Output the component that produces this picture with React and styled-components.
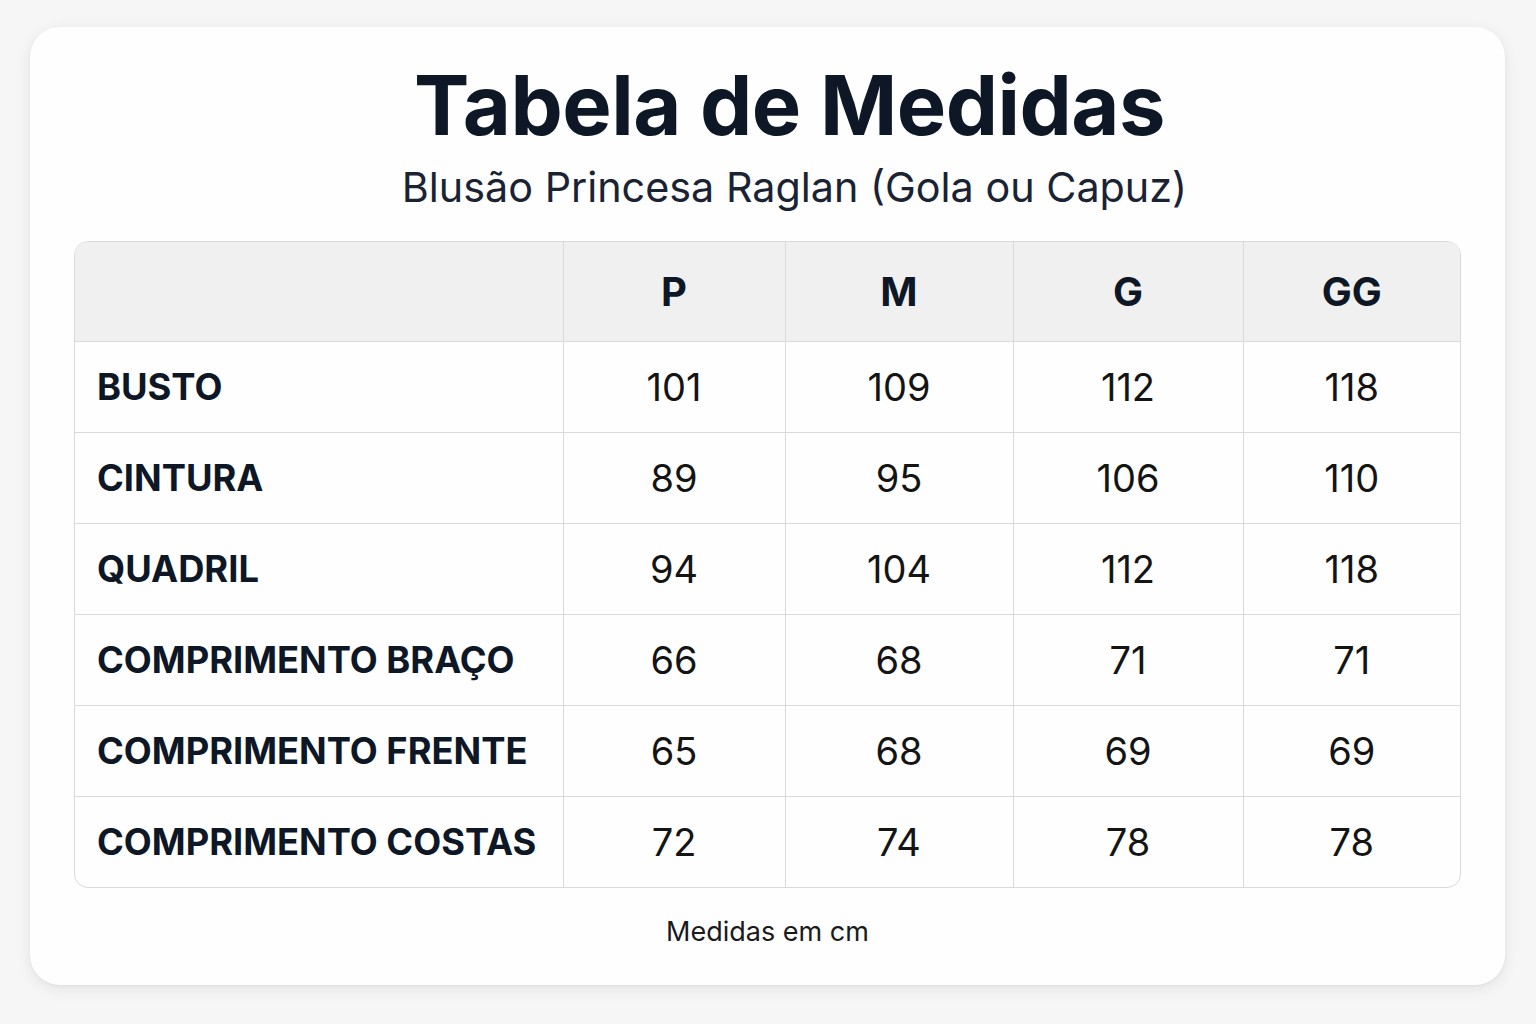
import React from 'react';
import styled, { createGlobalStyle } from 'styled-components';

const GlobalStyle = createGlobalStyle`
  html, body {
    margin: 0;
    padding: 0;
    background: #f6f6f6;
    font-family: Inter, "Noto Sans", sans-serif;
  }
`;

const Page = styled.div`
  width: 1536px;
  height: 1024px;
  box-sizing: border-box;
  padding: 27px 31px 39px 30px;
`;

const Card = styled.div`
  height: 100%;
  box-sizing: border-box;
  background: #fefefe;
  border-radius: 30px;
  box-shadow: 0 4px 16px rgba(0, 0, 0, 0.08), 0 1px 3px rgba(0, 0, 0, 0.05);
  padding: 37px 45px 0 45px;
  display: flex;
  flex-direction: column;
  align-items: center;
`;

const Title = styled.h1`
  margin: 0 0 0 44px;
  font-size: 83px;
  line-height: 1;
  font-weight: 700;
  color: #0d1726;
  letter-spacing: -0.5px;
`;

const Subtitle = styled.p`
  margin: 20px 0 0 54px;
  font-size: 41.3px;
  line-height: 1;
  font-weight: 400;
  color: #1a2333;
`;

const TableWrap = styled.div`
  margin-top: 33px;
  width: 100%;
  border: 1.5px solid #dadada;
  border-radius: 14px;
  overflow: hidden;
`;

const Table = styled.table`
  width: 100%;
  border-collapse: collapse;
  table-layout: fixed;
`;

const HeadCell = styled.th`
  height: 97px;
  background: #f0f0f0;
  font-size: 40px;
  font-weight: 700;
  color: #0d1726;
  text-align: center;
  border-left: 1.5px solid #dadada;
  border-bottom: 1.5px solid #dadada;
  &:first-child { border-left: none; }
`;

const Row = styled.tr`
  &:last-child td { border-bottom: none; }
`;

const LabelCell = styled.td`
  height: 88px;
  padding: 0 0 0 22px;
  font-size: 36.3px;
  font-weight: 700;
  color: #0d1726;
  white-space: nowrap;
  border-bottom: 1.5px solid #dadada;
`;

const ValueCell = styled.td`
  height: 88px;
  text-align: center;
  font-size: 38px;
  font-weight: 400;
  color: #141414;
  border-left: 1.5px solid #dadada;
  border-bottom: 1.5px solid #dadada;
`;

const Note = styled.p`
  margin: 27px 0 0;
  font-size: 27px;
  color: #1a1a1a;
`;

const sizes = ['P', 'M', 'G', 'GG'];

const rows = [
  ['BUSTO', [101, 109, 112, 118]],
  ['CINTURA', [89, 95, 106, 110]],
  ['QUADRIL', [94, 104, 112, 118]],
  ['COMPRIMENTO BRAÇO', [66, 68, 71, 71]],
  ['COMPRIMENTO FRENTE', [65, 68, 69, 69]],
  ['COMPRIMENTO COSTAS', [72, 74, 78, 78]],
];

const App = () => {
  return (
    <Page>
      <GlobalStyle />
      <Card>
        <Title>Tabela de Medidas</Title>
        <Subtitle>Blusão Princesa Raglan (Gola ou Capuz)</Subtitle>
        <TableWrap>
          <Table>
            <colgroup>
              <col style={{ width: 488 }} />
              <col style={{ width: 222 }} />
              <col style={{ width: 228 }} />
              <col style={{ width: 230 }} />
              <col />
            </colgroup>
            <thead>
              <tr>
                <HeadCell />
                {sizes.map((s) => (
                  <HeadCell key={s}>{s}</HeadCell>
                ))}
              </tr>
            </thead>
            <tbody>
              {rows.map(([label, values]) => (
                <Row key={label}>
                  <LabelCell>{label}</LabelCell>
                  {values.map((v, i) => (
                    <ValueCell key={i}>{v}</ValueCell>
                  ))}
                </Row>
              ))}
            </tbody>
          </Table>
        </TableWrap>
        <Note>Medidas em cm</Note>
      </Card>
    </Page>
  );
};

export default App;
